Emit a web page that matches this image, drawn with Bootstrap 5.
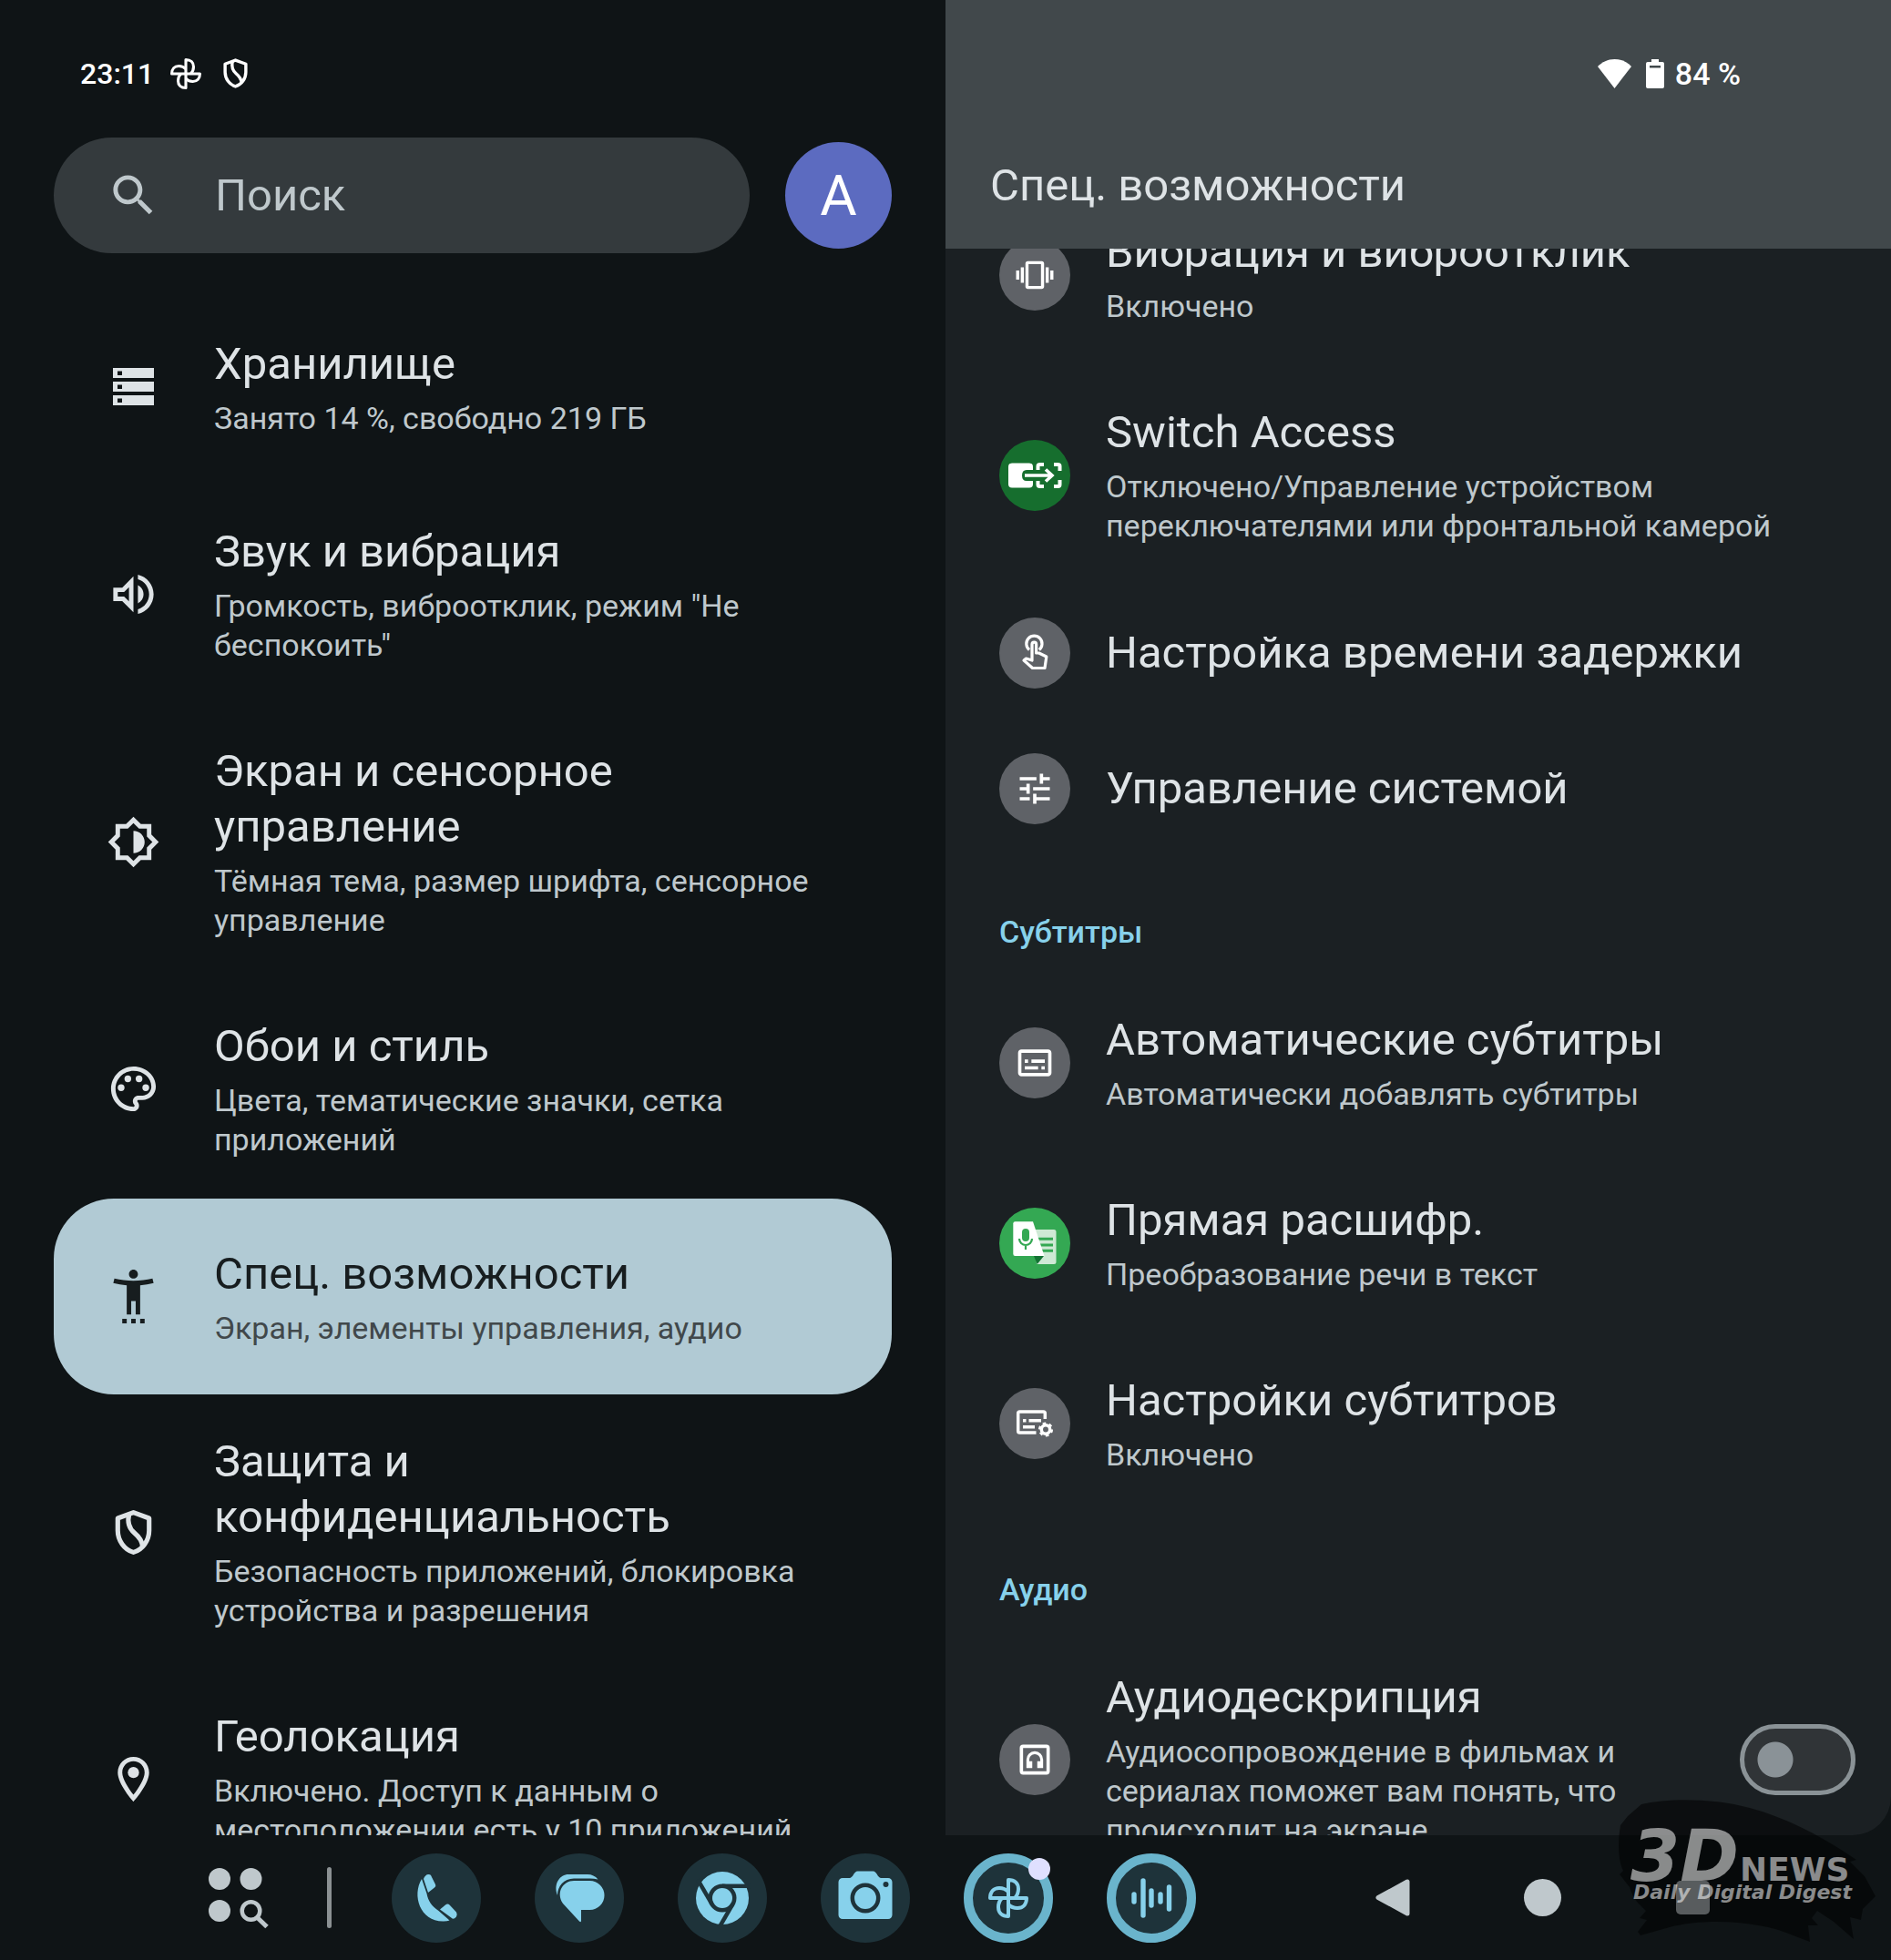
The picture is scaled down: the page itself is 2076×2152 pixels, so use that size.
<!DOCTYPE html>
<html lang="ru">
<head>
<meta charset="utf-8">
<meta name="viewport" content="width=device-width, initial-scale=1">
<title>Настройки – Спец. возможности</title>
<link href="https://cdn.jsdelivr.net/npm/bootstrap@5.3.0/dist/css/bootstrap.min.css" rel="stylesheet">
<style>
  :root { --bg:#0f1416; --panel:#1b2023; --head:#41484b; --text:#dee3e6; --muted:#bfc8cc; --accent:#87d1eb; --dock:#1e333a; }
  body { background:var(--bg); color:var(--text); font-family:Roboto,"Noto Sans",sans-serif; }
  a, a:hover { color:inherit; text-decoration:none; }
  svg { display:block; flex:none; overflow:visible; }
  .pane-main { padding:0 59px; }
  .pane-detail { background:var(--panel); border-bottom-right-radius:42px; }
  .status-row { height:111px; padding-top:50px; color:#fff; font-size:34px; font-weight:500; line-height:60px; flex:none; }
  .status-start { padding-left:29px; gap:18px; }
  .status-start span { font-size:32px; }
  .status-end { padding-right:165px; }
  .search-line { gap:39px; margin:40px 0 39px; flex:none; }
  .search-pill { height:127px; border-radius:64px; background:#343a3d; padding-left:58px; gap:60px; color:var(--muted); }
  .search-pill input { background:none; border:0; outline:0; color:var(--muted); font-size:49px; min-width:0; width:100%; padding:0; }
  .search-pill input::placeholder { color:var(--muted); opacity:1; }
  .avatar-btn { width:117px; height:117px; border:0; border-radius:50%; background:#5c6bc0; color:#fff; font-size:62px; font-weight:400; line-height:117px; padding:0; flex:none; }
  .item-title { font-size:49px; line-height:61px; font-weight:400; margin:0; }
  .item-sub { font-size:34px; line-height:43px; margin:8px 0 0; color:var(--muted); }
  .item-text { padding:43px 0; }
  .nav-item-row { min-height:215px; padding:0 58px; gap:59px; border-radius:66px; }
  .nav-item-row.selected { background:#b1cad4; color:#171d1f; }
  .nav-item-row.selected .item-sub { color:#41484b; }
  .detail-head { background:var(--head); flex:none; }
  .detail-head h1 { padding:62px 49px 39px; }
  .detail-clip { flex:1 1 0; min-height:0; overflow:hidden; }
  .detail-list { margin-top:-70px; }
  .detail-row { min-height:149px; padding:0 39px 0 59px; gap:39px; }
  .disc { width:78px; height:78px; border-radius:50%; background:#5f6267; color:#fff; flex:none; display:flex; align-items:center; justify-content:center; }
  .disc.dark-green { background:#166e2e; }
  .disc.light-green { background:#34a853; }
  .group-label { font-size:34px; line-height:43px; font-weight:500; color:var(--accent); margin:0; padding:62px 59px 23px; }
  .form-check-input.big-switch { width:127px; height:78px; margin:0; border:5px solid #8a9296; border-radius:39px; background:radial-gradient(circle at 34px 34px,#8a9297 19px,transparent 20px) #303437; flex:none; }
  .task-bar { height:137px; padding:0 188px 0 229px; }
  .task-bar button { background:none; border:0; padding:0; color:var(--muted); flex:none; }
  .bar-line { width:5px; height:67px; border-radius:3px; background:#8b9193; margin:0 66px 0 64px; }
  .app-strip { gap:59px; }
  .app-strip button { width:98px; height:98px; border-radius:50%; background:var(--dock); color:var(--accent); position:relative; }
  .app-strip .running { border:10px solid #6ab4cc; }
  .notify-dot { position:absolute; top:-5px; right:-7px; width:24px; height:24px; border-radius:50%; background:#dfe0ff; }
  .sys-keys { gap:105px; }
  .sys-keys button { width:60px; height:60px; display:flex; align-items:center; justify-content:center; }
  .brand-mark { position:absolute; right:14px; bottom:16px; pointer-events:none; }
</style>
</head>
<body class="vh-100 d-flex flex-column overflow-hidden">

<svg width="0" height="0" class="position-absolute" aria-hidden="true">
  <symbol id="i-fan" viewBox="-22 -22 44 44"><g fill="none" stroke="currentColor" stroke-width="4" stroke-linejoin="round"><path d="M0 0V-20C7-20 11-16 11-10C11-5 9-2 7 0"/><path d="M0 0V-20C7-20 11-16 11-10C11-5 9-2 7 0" transform="rotate(90)"/><path d="M0 0V-20C7-20 11-16 11-10C11-5 9-2 7 0" transform="rotate(180)"/><path d="M0 0V-20C7-20 11-16 11-10C11-5 9-2 7 0" transform="rotate(270)"/></g></symbol>
  <symbol id="i-shield" viewBox="0 0 24 24"><g fill="none" stroke="currentColor" stroke-width="2.1" stroke-linejoin="round"><path d="M12 3.1 5 5.7v5.500c0 4.400 2.900 8.500 7 9.700 4.100-1.200 7-5.300 7-9.700V5.700z"/><path d="M10 4c-.9 4 .2 6.300 2.400 8.200 2.400 2 3.600 3.700 3.700 6.300"/></g></symbol>
</svg>

<main class="d-flex flex-grow-1 overflow-hidden">
  <section class="pane-main w-50 d-flex flex-column overflow-hidden">
    <div class="status-row status-start d-flex align-items-center">
      <span>23:11</span>
      <svg width="34" height="34"><use href="#i-fan"/></svg>
      <svg width="39" height="39"><use href="#i-shield"/></svg>
    </div>
    <div class="search-line d-flex align-items-center">
      <label class="search-pill d-flex align-items-center flex-grow-1">
        <svg width="59" height="59" viewBox="0 0 24 24" fill="currentColor"><path d="M15.500 14h-.79l-.28-.27C15.410 12.590 16 11.110 16 9.500 16 5.910 13.090 3 9.500 3S3 5.910 3 9.500 5.910 16 9.500 16c1.610 0 3.090-.59 4.230-1.570l.27.28v.79l5 4.990L20.490 19l-4.990-5zm-6 0C7.010 14 5 11.990 5 9.500S7.010 5 9.500 5 14 7.010 14 9.500 11.990 14 9.500 14z"/></svg>
        <input type="search" placeholder="Поиск" aria-label="Поиск">
      </label>
      <button class="avatar-btn" type="button">A</button>
    </div>
    <nav>
      <a href="#" class="nav-item-row d-flex align-items-center">
        <svg width="59" height="59" viewBox="0 0 59 59"><path fill="currentColor" fill-rule="evenodd" d="M7 9h45v11H7zm5 3.500v4.500h5v-4.500zM7 24h45v11H7zm5 3.500v4.500h5v-4.500zM7 39h45v11H7zm5 3.500v4.500h5v-4.500z"/></svg>
        <div class="item-text"><h2 class="item-title">Хранилище</h2><p class="item-sub">Занято 14 %, свободно 219 ГБ</p></div>
      </a>
      <a href="#" class="nav-item-row d-flex align-items-center">
        <svg width="59" height="59" viewBox="0 0 24 24" fill="currentColor"><path d="M3 9v6h4l5 5V4L7 9H3zm7-.17v6.340L7.830 13H5v-2h2.830L10 8.830zM16.500 12c0-1.770-1.020-3.290-2.500-4.030v8.050c1.480-.73 2.500-2.250 2.500-4.020zM14 3.230v2.060c2.890.86 5 3.540 5 6.710s-2.110 5.850-5 6.710v2.060c4.010-.91 7-4.490 7-8.770s-2.990-7.860-7-8.770z"/></svg>
        <div class="item-text"><h2 class="item-title">Звук и вибрация</h2><p class="item-sub">Громкость, виброотклик, режим "Не<br>беспокоить"</p></div>
      </a>
      <a href="#" class="nav-item-row d-flex align-items-center">
        <svg width="59" height="59" viewBox="0 0 24 24" fill="currentColor"><path d="M20 8.690V4h-4.690L12 .69 8.690 4H4v4.690L.69 12 4 15.310V20h4.690L12 23.310 15.310 20H20v-4.690L23.310 12 20 8.690zm-2 5.790V18h-3.520L12 20.480 9.520 18H6v-3.520L3.520 12 6 9.520V6h3.520L12 3.520 14.480 6H18v3.520L20.480 12 18 14.480zM12 7v10c2.760 0 5-2.240 5-5s-2.240-5-5-5z"/></svg>
        <div class="item-text"><h2 class="item-title">Экран и сенсорное<br>управление</h2><p class="item-sub">Тёмная тема, размер шрифта, сенсорное<br>управление</p></div>
      </a>
      <a href="#" class="nav-item-row d-flex align-items-center">
        <svg width="59" height="59" viewBox="0 0 24 24" fill="currentColor"><path d="M12 22C6.490 22 2 17.510 2 12S6.490 2 12 2s10 4.040 10 9c0 3.310-2.690 6-6 6h-1.770c-.28 0-.5.22-.5.5 0 .12.05.23.13.33.41.47.64 1.060.64 1.670 0 1.380-1.120 2.500-2.500 2.500zm0-18c-4.410 0-8 3.590-8 8s3.590 8 8 8c.28 0 .5-.22.5-.5 0-.16-.08-.28-.14-.35-.41-.46-.63-1.050-.63-1.650 0-1.380 1.120-2.500 2.500-2.500H16c2.210 0 4-1.790 4-4 0-3.860-3.590-7-8-7z"/><circle cx="6.500" cy="11.500" r="1.500"/><circle cx="9.500" cy="7.500" r="1.500"/><circle cx="14.500" cy="7.500" r="1.500"/><circle cx="17.500" cy="11.500" r="1.500"/></svg>
        <div class="item-text"><h2 class="item-title">Обои и стиль</h2><p class="item-sub">Цвета, тематические значки, сетка<br>приложений</p></div>
      </a>
      <a href="#" class="nav-item-row selected d-flex align-items-center" aria-current="page">
        <svg width="59" height="59" viewBox="0 0 24 24" fill="currentColor"><path d="M20.500 4c-2.610.7-5.670 1-8.500 1s-5.890-.3-8.500-1L3 6c1.860.5 4 .83 6 1v13h2v-6h2v6h2V7c2-.17 4.140-.5 6-1l-.5-2zM12 4c1.100 0 2-.9 2-2s-.9-2-2-2-2 .9-2 2 .9 2 2 2zM7 24h2v-2H7zM11 24h2v-2h-2zM15 24h2v-2h-2z"/></svg>
        <div class="item-text"><h2 class="item-title">Спец. возможности</h2><p class="item-sub">Экран, элементы управления, аудио</p></div>
      </a>
      <a href="#" class="nav-item-row d-flex align-items-center">
        <svg width="59" height="59"><use href="#i-shield"/></svg>
        <div class="item-text"><h2 class="item-title">Защита и<br>конфиденциальность</h2><p class="item-sub">Безопасность приложений, блокировка<br>устройства и разрешения</p></div>
      </a>
      <a href="#" class="nav-item-row d-flex align-items-center">
        <svg width="59" height="59" viewBox="0 0 24 24" fill="currentColor"><path d="M12 2C8.130 2 5 5.130 5 9c0 5.250 7 13 7 13s7-7.750 7-13c0-3.870-3.130-7-7-7zM7 9c0-2.760 2.240-5 5-5s5 2.240 5 5c0 2.880-2.880 7.190-5 9.880C9.920 16.210 7 11.850 7 9z"/><circle cx="12" cy="9" r="2.500"/></svg>
        <div class="item-text"><h2 class="item-title">Геолокация</h2><p class="item-sub">Включено. Доступ к данным о<br>местоположении есть у 10 приложений</p></div>
      </a>
    </nav>
  </section>

  <section class="pane-detail w-50 d-flex flex-column overflow-hidden">
    <header class="detail-head">
      <div class="status-row status-end d-flex align-items-center justify-content-end">
        <svg width="37" height="32" viewBox="0 0 37 32" fill="currentColor"><path d="M18.500 32 0 8C5 3 11 0 18.500 0S32 3 37 8z"/></svg>
        <svg class="ms-3 me-2" width="20" height="32" viewBox="0 0 20 32"><path fill="currentColor" fill-rule="evenodd" d="M6 0h8v3h4a2 2 0 0 1 2 2v25a2 2 0 0 1-2 2H2a2 2 0 0 1-2-2V5a2 2 0 0 1 2-2h4zM4 7v2.500h12V7z"/></svg>
        <span class="ps-1">84 %</span>
      </div>
      <h1 class="item-title">Спец. возможности</h1>
    </header>
    <div class="detail-clip">
    <div class="detail-list">
      <a href="#" class="detail-row d-flex align-items-center">
        <span class="disc"><svg width="44" height="44" viewBox="-.9 -.9 25.800 25.800" fill="currentColor"><path d="M0 15h2V9H0v6zm3 2h2V7H3v10zm19-8v6h2V9h-2zm-3 8h2V7h-2v10zM16.500 3h-9C6.670 3 6 3.670 6 4.500v15c0 .83.67 1.500 1.500 1.500h9c.83 0 1.500-.67 1.500-1.500v-15c0-.83-.67-1.500-1.500-1.500zM16 19H8V5h8v14z"/></svg></span>
        <div class="item-text"><h2 class="item-title">Вибрация и виброотклик</h2><p class="item-sub">Включено</p></div>
      </a>
      <a href="#" class="detail-row d-flex align-items-center">
        <span class="disc dark-green"><svg width="60" height="30" viewBox="-30 -15 60 30"><rect x="-29" y="-13.500" width="27" height="27" rx="4" fill="#fff"/><g fill="none" stroke="#fff" stroke-width="4"><path d="M3.500-4v-6q0-2 2-2H10M21-12h4.500q2 0 2 2v5M27.500 5v5q0 2-2 2H21M10 12H5.500q-2 0-2-2V4"/></g><path d="M-14 0q0-6 5-6H8V6H-9q-5 0-5-6z" fill="#166e2e"/><path d="M-11 0H18M12-6.500 19 0l-7 6.500" fill="none" stroke="#fff" stroke-width="3.600"/></svg></span>
        <div class="item-text"><h2 class="item-title">Switch Access</h2><p class="item-sub">Отключено/Управление устройством<br>переключателями или фронтальной камерой</p></div>
      </a>
      <a href="#" class="detail-row d-flex align-items-center">
        <span class="disc"><svg width="44" height="44" viewBox="-22 -22 44 44" fill="none" stroke="currentColor" stroke-width="3.200" stroke-linejoin="round"><path d="M-3 8V-9.500a2.300 2.300 0 0 1 4.600 0V0h3L12.800 4 11 16.500H-2.500L-12 8l2.500-2z"/><path d="M-6-3.500a8.600 8.600 0 1 1 10.800 0"/></svg></span>
        <div class="item-text"><h2 class="item-title">Настройка времени задержки</h2></div>
      </a>
      <a href="#" class="detail-row d-flex align-items-center">
        <span class="disc"><svg width="44" height="44" viewBox="0 0 24 24" fill="currentColor"><path d="M3 17v2h6v-2H3zM3 5v2h10V5H3zm10 16v-2h8v-2h-8v-2h-2v6h2zM7 9v2H3v2h4v2h2V9H7zm14 4v-2H11v2h10zm-6-4h2V7h4V5h-4V3h-2v6z"/></svg></span>
        <div class="item-text"><h2 class="item-title">Управление системой</h2></div>
      </a>
      <h3 class="group-label">Субтитры</h3>
      <a href="#" class="detail-row d-flex align-items-center">
        <span class="disc"><svg width="44" height="44" viewBox="0 0 24 24" fill="currentColor"><path d="M20 4H4c-1.100 0-2 .9-2 2v12c0 1.100.9 2 2 2h16c1.100 0 2-.9 2-2V6c0-1.100-.9-2-2-2zm0 14H4V6h16v12zM6 10h2v2H6zm0 4h8v2H6zm10 0h2v2h-2zm-6-4h8v2h-8z"/></svg></span>
        <div class="item-text"><h2 class="item-title">Автоматические субтитры</h2><p class="item-sub">Автоматически добавлять субтитры</p></div>
      </a>
      <a href="#" class="detail-row d-flex align-items-center">
        <span class="disc light-green"><svg width="60" height="60" viewBox="-30 -30 60 60"><path d="M0-15H21a2.500 2.500 0 0 1 2.500 2.500v33A2.500 2.500 0 0 1 21 23H2z" fill="#cee9d5"/><path d="M3-4.800H20M5 2H20M7 8.300H20" stroke="#34a853" stroke-width="3"/><path d="M-1 14H10L2.700 23z" fill="#137333"/><path d="M-21.500-23.700H-2L10.500 14H-21.500a2.200 2.200 0 0 1-2.200-2.200V-21.500a2.200 2.200 0 0 1 2.200-2.200z" fill="#fff"/><rect x="-14" y="-16" width="8" height="14" rx="4" fill="#34a853"/><path d="M-17-5a7 7 0 0 0 14 0M-10 2V7" fill="none" stroke="#34a853" stroke-width="2.200"/></svg></span>
        <div class="item-text"><h2 class="item-title">Прямая расшифр.</h2><p class="item-sub">Преобразование речи в текст</p></div>
      </a>
      <a href="#" class="detail-row d-flex align-items-center">
        <span class="disc"><svg width="44" height="44" viewBox="-22 -22 44 44"><path d="M1.500 10H-16.500a1.800 1.800 0 0 1-1.800-1.800V-11.200a1.800 1.800 0 0 1 1.800-1.800h26a1.800 1.800 0 0 1 1.800 1.800V-5" fill="none" stroke="#fff" stroke-width="3.500"/><path d="M-13-5h3.500v3.500H-13zM-6.500-5H7v3.500H-6.500zM-13 2H0v3.500H-13z" fill="#fff"/><circle cx="12" cy="6.500" r="4.700" fill="none" stroke="#fff" stroke-width="3.500"/><circle cx="12" cy="6.500" r="6.800" fill="none" stroke="#fff" stroke-width="2.500" stroke-dasharray="3.600 3.520"/></svg></span>
        <div class="item-text"><h2 class="item-title">Настройки субтитров</h2><p class="item-sub">Включено</p></div>
      </a>
      <h3 class="group-label">Аудио</h3>
      <div class="detail-row d-flex align-items-center">
        <span class="disc"><svg width="44" height="44" viewBox="0 0 24 24"><rect x="4" y="4" width="16" height="16" rx="1" fill="none" stroke="#fff" stroke-width="2"/><path d="M7 17v-5a5 5 0 0 1 10 0v5h-3.500v-4H15.300v-1a3.300 3.300 0 0 0-6.600 0v1h1.800v4z" fill="#fff"/></svg></span>
        <label class="item-text flex-grow-1" for="audioDesc"><span class="item-title d-block">Аудиодескрипция</span><span class="item-sub d-block">Аудиосопровождение в фильмах и<br>сериалах поможет вам понять, что<br>происходит на экране</span></label>
        <input class="form-check-input big-switch" type="checkbox" role="switch" id="audioDesc">
      </div>
    </div>
    </div>
  </section>
</main>

<footer class="task-bar d-flex align-items-center flex-shrink-0 position-relative">
  <button type="button" aria-label="Все приложения"><svg width="66" height="66" viewBox="0 0 66 66" fill="currentColor"><circle cx="12" cy="12" r="12"/><circle cx="46.500" cy="12" r="12"/><circle cx="12" cy="47" r="12"/><circle cx="46.500" cy="47" r="9.800" fill="none" stroke="currentColor" stroke-width="4.500"/><path d="M53 54l11 10.500" stroke="currentColor" stroke-width="5"/></svg></button>
  <span class="bar-line"></span>
  <div class="app-strip d-flex">
    <button type="button" aria-label="Телефон"><svg width="98" height="98" viewBox="-49 -49 98 98" fill="currentColor"><path d="M-14-21C-13-24-11-26-8.500-26S-6-25-5.500-24L-1-15q1 2-1 3.500L-9-6zM4 12.500 10 7.500q2.500-2 4.500 0L22 15.500q1.500 3 0 5Q20 23 18 22.800zM-16-21C-27-3-18 26 8 25.500Q12 25.500 14.500 24.500L2.500 14C-5 9-9 3-10.500-5z"/></svg></button>
    <button type="button" aria-label="Сообщения"><svg width="98" height="98" viewBox="-49 -49 98 98" fill="currentColor"><path d="M-24-3C-29-16-21-26-12-26H9Q16-26 20.500-20.500 16-21.500 11.500-21.500H-6C-17-21.500-24-13-24-3z"/><path d="M-6-19H11.500a16 16 0 0 1 0 32H2V25q0 2-2 .5L-18 6C-26-6-18-19-6-19z"/></svg></button>
    <button type="button" aria-label="Chrome"><svg width="98" height="98" viewBox="-49 -49 98 98"><circle r="29" fill="#87d1eb"/><circle r="15.500" fill="#1e333a"/><circle r="11" fill="#87d1eb"/><g stroke="#1e333a" stroke-width="4.500"><path d="M0-13.200H31"/><path d="M0-13.200H31" transform="rotate(120)"/><path d="M0-13.200H31" transform="rotate(240)"/></g></svg></button>
    <button type="button" aria-label="Камера"><svg width="98" height="98" viewBox="-49 -49 98 98" fill="currentColor"><path d="M-25-22h7.500c4 0 5-7.500 9-7.500h17c4 0 5 7.500 9 7.500H25a4.500 4.500 0 0 1 4.500 4.500v36A4.500 4.500 0 0 1 25 23h-50a4.500 4.500 0 0 1-4.500-4.500v-36A4.500 4.500 0 0 1-25-22z"/><circle r="14.200" fill="none" stroke="#1e333a" stroke-width="4.500"/><circle cx="22.500" cy="-15" r="3" fill="#1e333a"/></svg></button>
    <button type="button" class="running" aria-label="Фото"><svg class="m-auto" width="44" height="44"><use href="#i-fan"/></svg><span class="notify-dot"></span></button>
    <button type="button" class="running" aria-label="Диктофон"><svg class="m-auto" width="44" height="44" viewBox="-22 -22 44 44" stroke="currentColor" stroke-width="5.400" stroke-linecap="round"><path d="M-19-4V4M-9-19V19M0-8V8M10-4V4M19.500-12V12"/></svg></button>
  </div>
  <div class="sys-keys d-flex ms-auto">
    <button type="button" aria-label="Назад"><svg width="37" height="41" viewBox="0 0 37 41"><path d="M35 3V38L3 20.500z" fill="currentColor" stroke="currentColor" stroke-width="5" stroke-linejoin="round"/></svg></button>
    <button type="button" aria-label="Домой"><svg width="41" height="41" viewBox="-20.500 -20.500 41 41"><circle r="20.500" fill="currentColor"/></svg></button>
    <button type="button" aria-label="Недавние"><svg width="37" height="37" viewBox="0 0 37 37"><rect width="37" height="37" rx="5" fill="currentColor"/></svg></button>
  </div>
  <svg class="brand-mark" width="286" height="162" viewBox="1775 1972 286 162" role="img" aria-label="3DNews">
    <path fill="#000" fill-opacity=".54" d="M1801 1979C1830 1972 1880 1972 1920 1983C1965 1995 2005 2018 2037 2040L2030 2042L2046 2058L2058 2080L2044 2094L2042 2106L2030 2103L2034 2127L2012 2108L1994 2096L1988 2104L1995 2112L1984 2112L1986 2130L1970 2124C1930 2106 1870 2104 1832 2114L1800 2123L1797 2119L1807 2106L1799 2104L1806 2096C1798 2088 1792 2084 1788 2070L1777 2056L1781 2052C1775 2040 1775 2020 1778 2002L1786 1992z"/>
    <g fill="#fff" fill-opacity=".53" font-family="'DejaVu Sans',sans-serif" font-weight="700">
      <text x="1789" y="2063" font-size="78" font-style="italic">3D</text>
      <text x="1909" y="2063" font-size="36">NEWS</text>
      <text x="1792" y="2083" font-size="22" font-style="italic">Daily Digital Digest</text>
    </g>
  </svg>
</footer>

<script src="https://cdn.jsdelivr.net/npm/bootstrap@5.3.0/dist/js/bootstrap.bundle.min.js"></script>
</body>
</html>
